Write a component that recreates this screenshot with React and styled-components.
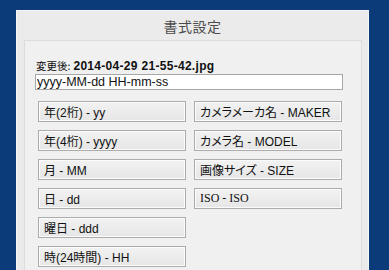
import React, { useState } from "react";
import styled, { createGlobalStyle } from "styled-components";

const Global = createGlobalStyle`
  html, body {
    margin: 0;
    padding: 0;
    height: 100%;
    overflow: hidden;
    background: #0c3b79;
  }
  #root {
    height: 100%;
  }
`;

const Page = styled.div`
  height: 100%;
  padding: 10px 20px 0 16px;
  box-sizing: border-box;
`;

const Dialog = styled.div`
  width: 353px;
  height: 100%;
  box-sizing: border-box;
  background: #ebebeb;
  border: 1px solid #f6f6f6;
  border-bottom: none;
  display: flex;
  flex-direction: column;
  overflow: hidden;
`;

const Title = styled.div`
  height: 29px;
  flex-shrink: 0;
  display: flex;
  align-items: center;
  justify-content: center;
  font-family: "Noto Sans CJK JP", sans-serif;
  font-size: 14px;
  color: #4b4b4b;
  letter-spacing: 0.5px;
`;

const Panel = styled.div`
  flex: 1;
  margin: 0 6px 0 7px;
  background: #f0f0f0;
  border: 1px solid #dcdcdc;
  border-bottom: none;
  padding: 17px 18px 0 10px;
  font-family: "Liberation Sans", "Noto Sans CJK JP", sans-serif;
`;

const Label = styled.div`
  display: flex;
  align-items: baseline;
  height: 16px;
  color: #111;
  span {
    font-size: 10.5px;
    font-family: "Noto Sans CJK JP", sans-serif;
    margin-left: 1px;
  }
  b {
    font-size: 12px;
    margin-left: 3px;
    letter-spacing: 0.3px;
  }
`;

const Input = styled.input`
  display: block;
  width: 308px;
  height: 16px;
  box-sizing: border-box;
  margin: 0;
  border: 1px solid #a7a7a7;
  background: #fff;
  padding: 0 1px;
  font-family: "Liberation Sans", sans-serif;
  font-size: 12.5px;
  color: #111;
  outline: none;
`;

const Grid = styled.div`
  margin: 11px 0 0 3px;
  width: 304px;
  display: grid;
  grid-template-columns: 148px 148px;
  grid-template-rows: repeat(6, 21px);
  grid-auto-flow: column;
  column-gap: 8px;
  row-gap: 8px;
`;

const FormatButton = styled.button`
  box-sizing: border-box;
  height: 21px;
  margin: 0;
  padding: 0 0 0 5px;
  text-align: left;
  border: 1px solid #acacac;
  background: linear-gradient(#f2f2f2, #e6e6e6);
  box-shadow: inset 0 0 0 1px #fbfbfb;
  font-family: ${(p) =>
    p.serif ? '"Liberation Serif", serif' : '"Liberation Sans", "Noto Sans CJK JP", sans-serif'};
  font-feature-settings: "palt";
  font-size: 12px;
  color: #111;
  white-space: nowrap;
  cursor: pointer;
`;

const leftItems = [
  "年(2桁) - yy",
  "年(4桁) - yyyy",
  "月 - MM",
  "日 - dd",
  "曜日 - ddd",
  "時(24時間) - HH",
];

const rightItems = [
  "カメラメーカ名 - MAKER",
  "カメラ名 - MODEL",
  "画像サイズ - SIZE",
  "ISO - ISO",
];

export default function App() {
  const [format, setFormat] = useState("yyyy-MM-dd HH-mm-ss");

  return (
    <Page>
      <Global />
      <Dialog>
        <Title>書式設定</Title>
        <Panel>
          <Label>
            <span>変更後:</span>
            <b>2014-04-29 21-55-42.jpg</b>
          </Label>
          <Input value={format} onChange={(e) => setFormat(e.target.value)} />
          <Grid>
            {leftItems.map((t) => (
              <FormatButton key={t}>{t}</FormatButton>
            ))}
            {rightItems.map((t) => (
              <FormatButton key={t} serif={t.startsWith("ISO")}>
                {t}
              </FormatButton>
            ))}
          </Grid>
        </Panel>
      </Dialog>
    </Page>
  );
}
